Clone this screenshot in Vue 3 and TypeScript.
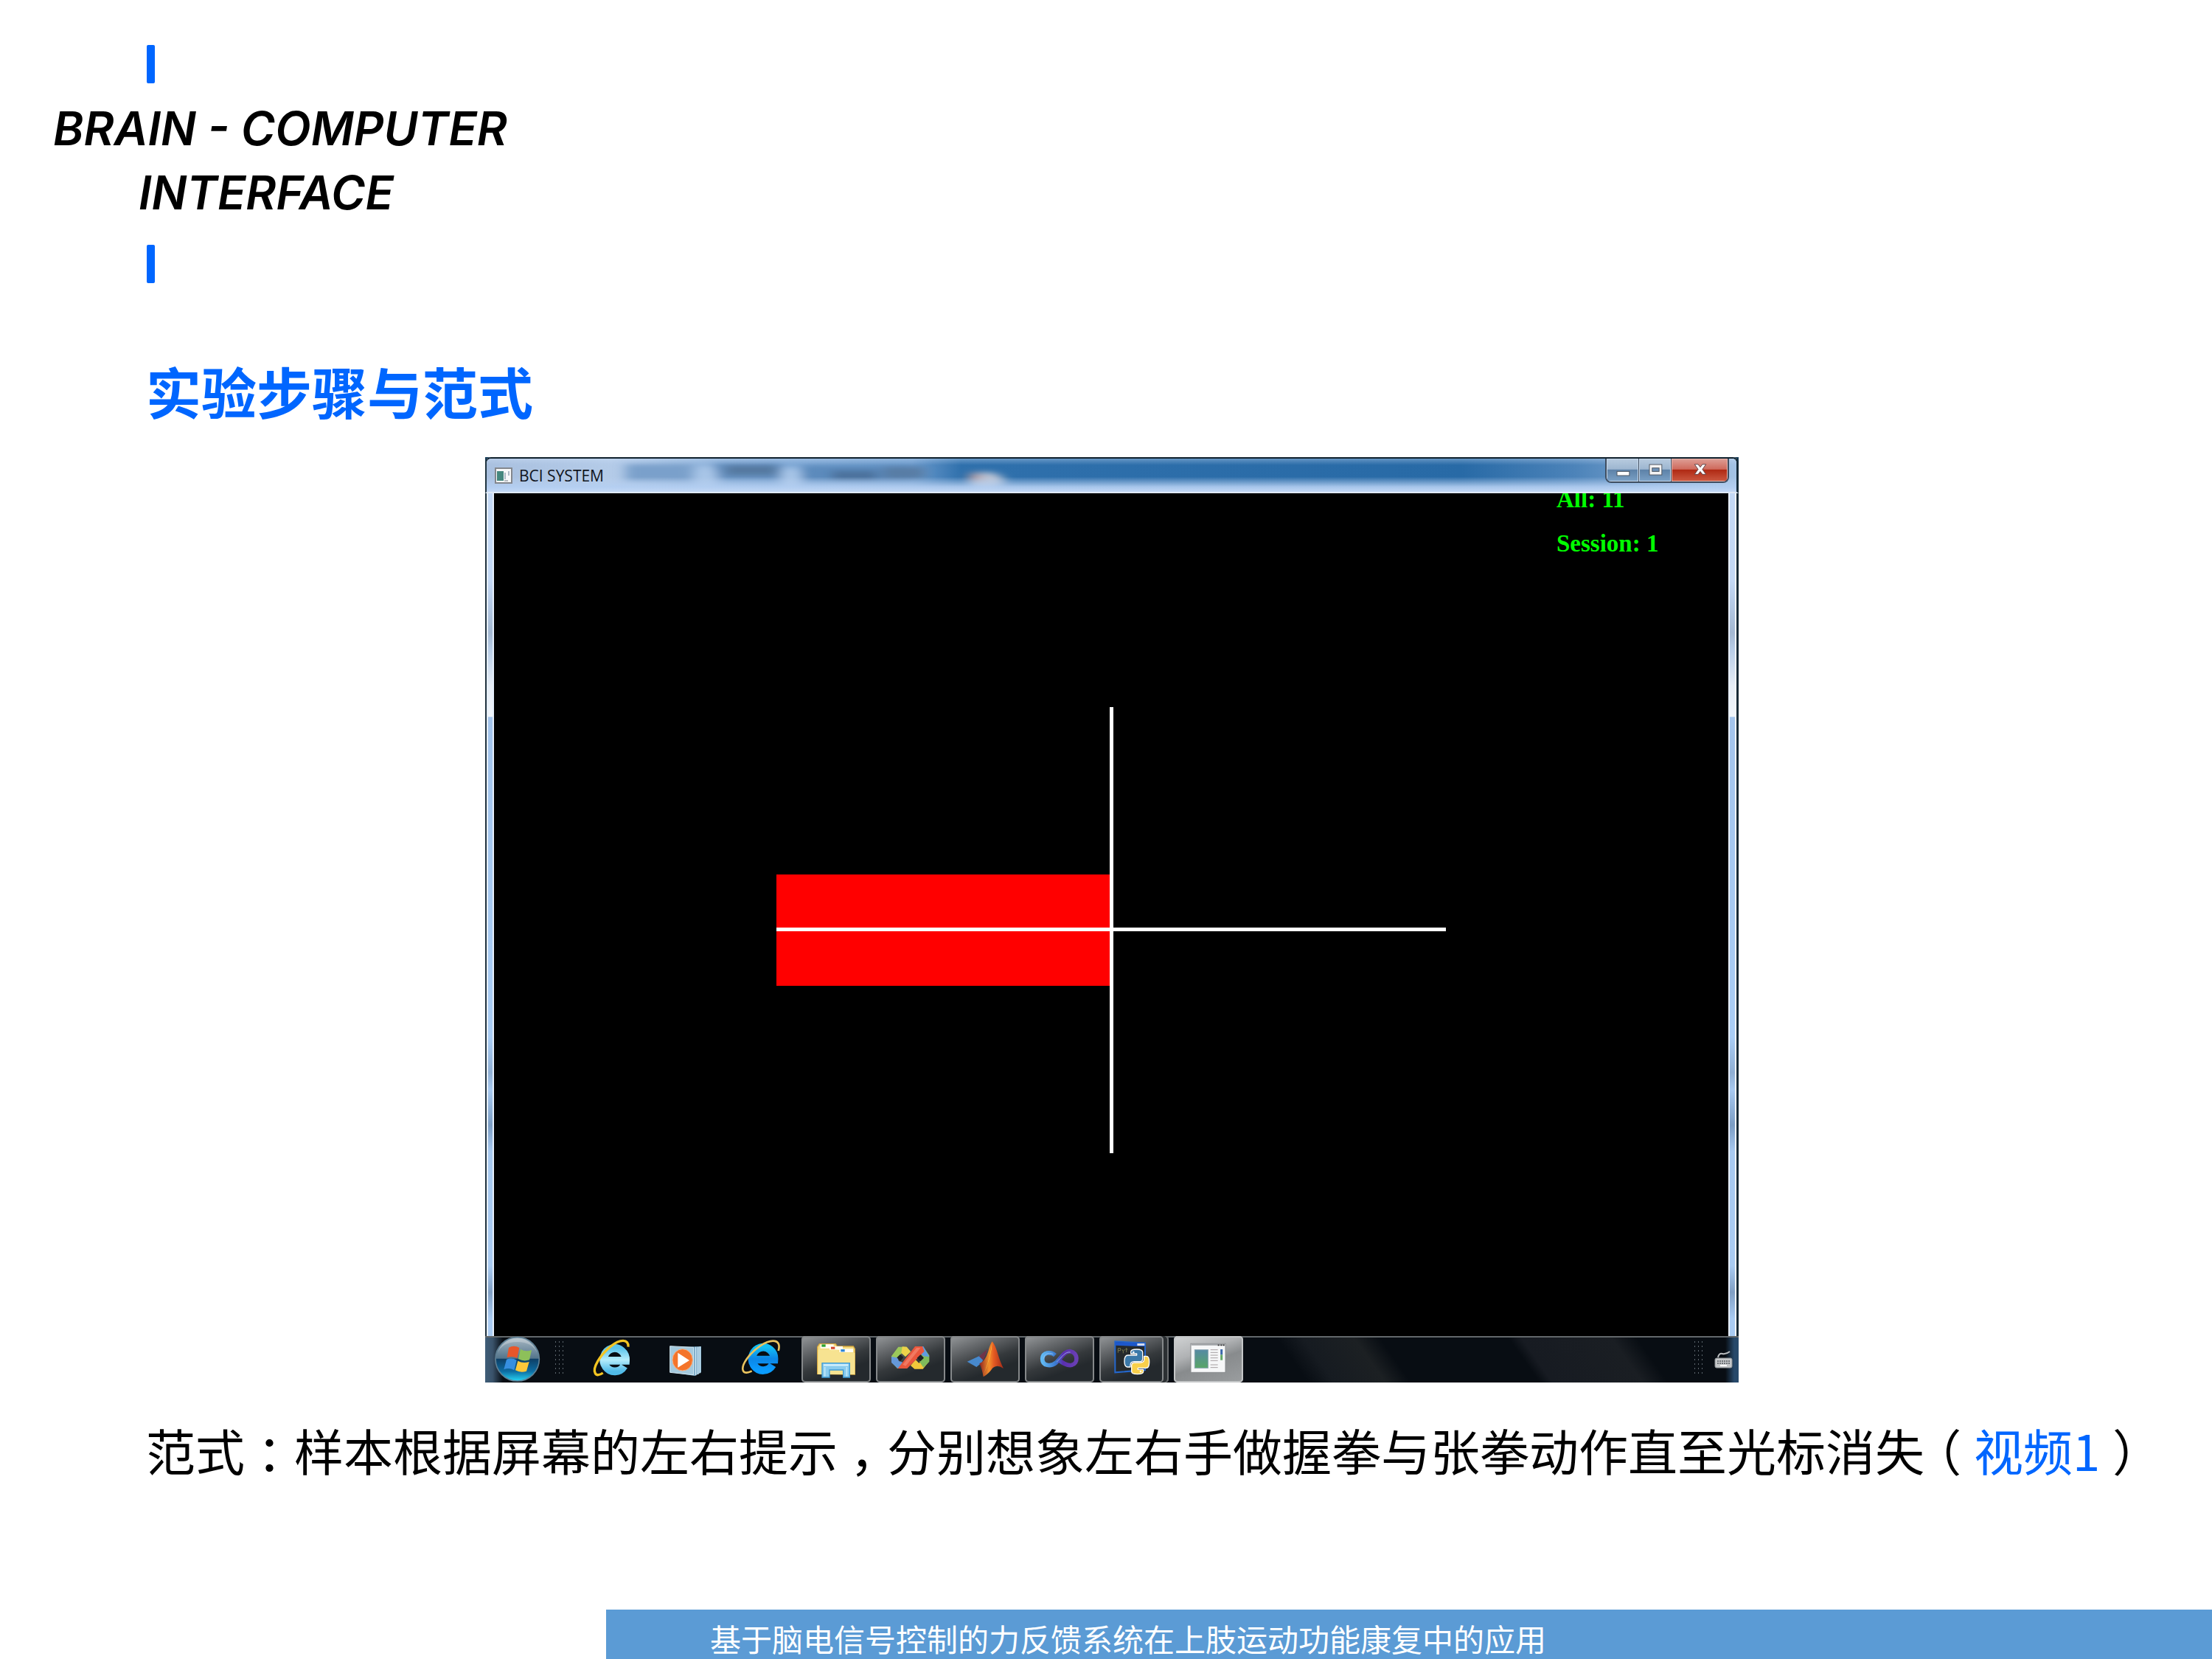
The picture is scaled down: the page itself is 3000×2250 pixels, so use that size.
<script setup lang="ts">
interface Spot {
  x: number
  width: number
  fill: string
  y: number
  height: number
}

// Soft shapes of the desktop that shine through the glass title bar.
const glassSpots: Spot[] = [
  { x: 190, y: 8, width: 90, height: 26, fill: '#7aa0cb' },
  { x: 310, y: 6, width: 90, height: 26, fill: '#6590c0' },
  { x: 325, y: 10, width: 70, height: 14, fill: '#54789f' },
  { x: 430, y: 10, width: 150, height: 24, fill: '#5c8abc' },
  { x: 470, y: 18, width: 60, height: 14, fill: '#4c719b' },
  { x: 540, y: 12, width: 56, height: 18, fill: '#587da5' },
]
const gripRows = [0, 1, 2, 3, 4, 5, 6, 7]
const gripColumns = [0, 1, 2]
const docLines = [152, 163, 174, 185, 196, 213, 224]
</script>

<template>
  <div class="page">
    <header class="brand">
      <span class="tick"></span>
      <h1>
        <span class="first">BRAIN - COMPUTER</span>
        <span class="second">INTERFACE</span>
      </h1>
      <span class="tick"></span>
    </header>

    <main>
      <h2>实验步骤与范式</h2>

      <section class="desktop" aria-label="BCI SYSTEM">
        <div class="window">
          <div class="titlebar">
            <svg class="glass" viewBox="0 0 1700 49" preserveAspectRatio="none" aria-hidden="true">
              <defs>
                <linearGradient id="tone" x1="0" x2="1" y1="0" y2="0">
                  <stop offset="0" stop-color="#a9c0df" />
                  <stop offset="0.1" stop-color="#b4cbe8" />
                  <stop offset="0.2" stop-color="#82aad6" />
                  <stop offset="0.34" stop-color="#6d9cce" />
                  <stop offset="0.38" stop-color="#2f70ac" />
                  <stop offset="0.78" stop-color="#286aa6" />
                  <stop offset="0.87" stop-color="#4c83b9" />
                  <stop offset="1" stop-color="#a4c3e4" />
                </linearGradient>
                <linearGradient id="sheen" x1="0" x2="0" y1="0" y2="1">
                  <stop offset="0" stop-color="#d6e6fa" stop-opacity="0.35" />
                  <stop offset="0.2" stop-color="#bcd2f0" stop-opacity="0" />
                  <stop offset="0.55" stop-color="#bcd2f0" stop-opacity="0" />
                  <stop offset="0.85" stop-color="#b4cff2" stop-opacity="0.9" />
                  <stop offset="1" stop-color="#c3d8f5" />
                </linearGradient>
                <filter id="soft" x="-20%" y="-60%" width="140%" height="220%">
                  <feGaussianBlur stdDeviation="8 4" />
                </filter>
              </defs>
              <rect width="1700" height="49" fill="url(#tone)" />
              <g filter="url(#soft)">
                <rect v-for="s in glassSpots" :key="s.x" :x="s.x" :y="s.y" :width="s.width" :height="s.height" :fill="s.fill" />
                <ellipse cx="298" cy="30" rx="16" ry="20" fill="#a9c6e8" />
                <ellipse cx="414" cy="30" rx="14" ry="18" fill="#a9c6e8" />
                <ellipse cx="680" cy="34" rx="24" ry="14" fill="#b9c3d4" />
                <ellipse cx="664" cy="28" rx="8" ry="8" fill="#b09aa0" />
              </g>
              <rect width="1700" height="49" fill="url(#sheen)" />
            </svg>
            <svg class="app-icon" viewBox="0 0 24 22" aria-hidden="true">
              <rect x="1" y="1" width="22" height="20" fill="#f7f8f9" stroke="#84878d" stroke-width="2" />
              <rect x="3" y="5" width="9" height="13" fill="#45877e" />
              <path d="M14 7v9M19 5v6" stroke="#657a91" stroke-width="1" />
              <path d="M13 18h5" stroke="#b6bac0" stroke-width="2" />
            </svg>
            <span class="caption">BCI SYSTEM</span>
            <div class="controls">
              <button type="button" class="control" aria-label="Minimize">
                <svg viewBox="0 0 46 32"><rect x="15" y="18" width="18" height="6" fill="#fff" stroke="#4c535c" /></svg>
              </button>
              <button type="button" class="control" aria-label="Maximize">
                <svg viewBox="0 0 46 32">
                  <rect x="15" y="8" width="18" height="15" fill="#f4f4f4" stroke="#4c535c" />
                  <rect x="19" y="13" width="10" height="5" fill="#6d91b7" stroke="#4c535c" />
                </svg>
              </button>
              <button type="button" class="control close" aria-label="Close">
                <svg viewBox="0 0 76 32">
                  <path d="M31 8h5l3 4 3-4h5l-5 7 5 7h-5l-3-4-3 4h-5l5-7z" fill="#fff" stroke="#5c4044" />
                </svg>
              </button>
            </div>
          </div>

          <svg class="scene" viewBox="0 0 1674 1143" role="img" aria-label="Session">
            <rect width="1674" height="1143" fill="#000" />
            <rect x="383" y="517" width="453" height="151" fill="#f00" />
            <rect x="383" y="589" width="908" height="5" fill="#fff" />
            <rect x="835" y="290" width="5" height="605" fill="#fff" />
            <text x="1441" y="19" class="readout">All: 11</text>
            <text x="1441" y="79" class="readout">Session: 1</text>
          </svg>
        </div>

        <nav class="taskbar">
          <button type="button" class="orb" aria-label="Start">
            <svg viewBox="90 96 192 189">
              <defs>
                <linearGradient id="orbTop" x1="0" x2="0" y1="0" y2="1">
                  <stop offset="0" stop-color="#a9b9c4" />
                  <stop offset="0.48" stop-color="#54758c" />
                  <stop offset="0.5" stop-color="#0e3f66" />
                  <stop offset="0.78" stop-color="#0d6da3" />
                  <stop offset="1" stop-color="#27d6f5" />
                </linearGradient>
              </defs>
              <circle cx="185" cy="190" r="89" fill="url(#orbTop)" stroke="#5f8095" stroke-width="5" />
              <path d="M104 166a84 84 0 0 1 162 0q-20-46-81-46t-81 46z" fill="#fff" opacity="0.25" />
              <path d="M150 143q22-12 43 1l-9 42q-18-11-41-3z" fill="#e8562a" />
              <path d="M198 149q20 13 45 4l-9 40q-24 8-45-4z" fill="#8dc05a" />
              <path d="M141 191q22-8 41 3l-10 41q-20-12-42-3z" fill="#368fe0" />
              <path d="M187 197q20 12 46 4l-11 38q-24 8-45-4z" fill="#fcc83a" />
            </svg>
          </button>

          <svg class="grip" viewBox="0 0 14 63" aria-hidden="true">
            <template v-for="r in gripRows" :key="r">
              <rect v-for="c in gripColumns" :key="c" :x="1 + c * 5" :y="7 + r * 6" width="1" height="2" fill="#5d666d" />
            </template>
          </svg>

          <div class="apps">
            <button type="button" class="app" aria-label="Internet Explorer">
              <svg viewBox="429 96 282 189">
                <defs>
                  <linearGradient id="ieLight" x1="0" x2="0" y1="0" y2="1">
                    <stop offset="0" stop-color="#5cc4ea" />
                    <stop offset="0.5" stop-color="#b5edfb" />
                    <stop offset="1" stop-color="#51bbe8" />
                  </linearGradient>
                </defs>
                <path d="M530 196H623A45 47 0 1 0 616 218" fill="none" stroke="url(#ieLight)" stroke-width="32" />
                <path d="M633 140C636 108 600 106 562 138C518 174 486 226 499 248C504 257 516 256 530 246" fill="none" stroke="#f4c521" stroke-width="10" />
              </svg>
            </button>
            <button type="button" class="app" aria-label="Media Player">
              <svg viewBox="732 96 282 189">
                <path d="M830 142l100-4v106l-26 14-80-12z" fill="#79a9c6" />
                <path d="M908 140v116M917 140v112M925 139v108" stroke="#d7edf8" stroke-width="4" />
                <path d="M803 137l96 5v112l-96-10z" fill="#a4c9dd" stroke="#d3e6ef" stroke-width="3" />
                <ellipse cx="854" cy="193" rx="41" ry="44" fill="#f4742a" stroke="#f9b183" stroke-width="3" />
                <path d="M835 164v60l47-29z" fill="#fff" />
              </svg>
            </button>
            <button type="button" class="app" aria-label="Internet Explorer">
              <svg viewBox="1035 96 282 189">
                <defs>
                  <linearGradient id="ieDeep" x1="0" x2="0" y1="0" y2="1">
                    <stop offset="0" stop-color="#12bff5" />
                    <stop offset="0.5" stop-color="#0c86e6" />
                    <stop offset="1" stop-color="#0a9cff" />
                  </linearGradient>
                </defs>
                <path d="M1134 192H1227A45 47 0 1 0 1220 214" fill="none" stroke="url(#ieDeep)" stroke-width="32" />
                <path d="M1244 156C1258 108 1216 106 1170 136C1126 166 1090 216 1101 238C1106 248 1120 246 1136 238" fill="none" stroke="#e9c25e" stroke-width="8" />
              </svg>
            </button>
            <button type="button" class="app open" aria-label="Explorer">
              <svg viewBox="78 96 282 189">
                <path d="M143 250V140l8-12h66l6 10h66l6 10v104z" fill="#f4dc83" stroke="#d5a63e" stroke-width="4" />
                <path d="M155 130h54v16h-54zM192 138h54v14h-54zM232 148h56v14h-56z" fill="#fffdf4" />
                <path d="M160 130h16v10h-16z" fill="#2aa22f" />
                <path d="M198 140h16v9h-16z" fill="#d4432a" />
                <path d="M238 150h16v10h-16z" fill="#2f87d8" />
                <path d="M145 152h80l8 12h62v88H145z" fill="#f7e391" />
                <path d="M162 264v-58h112v58h-26v-30h-56v30z" fill="#8accee" stroke="#3f9ad3" stroke-width="4" />
                <path d="M168 214h100" stroke="#d6f2ff" stroke-width="7" />
                <path d="M173 222v38M262 222v38" stroke="#c1e8fa" stroke-width="5" />
              </svg>
            </button>
            <button type="button" class="app open" aria-label="Editor">
              <svg viewBox="381 96 282 189">
                <path d="M444 178l28-38h34l16 20-22 20-14-14-16 16v16l16 18-18 12-24-26z" fill="#9bc85a" />
                <path d="M444 180v24l26 24h20l-2-26-14-4-6-14z" fill="#6598d8" />
                <path d="M506 140l16 19-20 20-18-14 4-26z" fill="#ecd24a" />
                <path d="M522 216l16 14h34l24-30-26-6-14 12-14-14z" fill="#f1c83b" />
                <path d="M558 140h16l24 34v26l-24 24-16-24 16-16-16-20z" fill="#7fbb5b" />
                <path d="M560 138h14l24 42-24-2-16-16z" fill="#5f9ae0" />
                <path d="M470 228l70-90h30l8 20-70 70z" fill="#e9573d" />
                <path d="M490 212l56-68h16l-60 74z" fill="#f7907a" opacity="0.6" />
                <path d="M562 172l14 13-14 14-14-14z" fill="#1d2023" />
                <path d="M480 170l13 13-13 15-14-14z" fill="#1d2023" />
              </svg>
            </button>
            <button type="button" class="app open" aria-label="MATLAB">
              <svg viewBox="684 96 282 189">
                <defs>
                  <linearGradient id="peak" x1="0" x2="1" y1="0" y2="0">
                    <stop offset="0" stop-color="#8c2220" />
                    <stop offset="0.4" stop-color="#f3902c" />
                    <stop offset="0.6" stop-color="#e45a22" />
                    <stop offset="1" stop-color="#a32a18" />
                  </linearGradient>
                </defs>
                <path d="M752 200l48-22 34-26-22 52-22 18z" fill="#4789cc" />
                <path d="M800 178l36-30-18 48z" fill="#703448" />
                <path d="M802 208q24-10 36-50 8-30 16-40 12 14 22 48 12 40 24 62-26-18-44-2-16 24-38 36-6-36-16-54z" fill="url(#peak)" />
                <path d="M854 120q-2 60-38 140 24-60 30-94z" fill="#ffd54c" opacity="0.8" />
              </svg>
            </button>
            <button type="button" class="app open" aria-label="Blend">
              <svg viewBox="57 96 282 189">
                <defs>
                  <linearGradient id="loop" x1="0" x2="1" y1="0" y2="0">
                    <stop offset="0" stop-color="#61b9f3" />
                    <stop offset="0.4" stop-color="#3a78cf" />
                    <stop offset="0.6" stop-color="#5a2fb0" />
                    <stop offset="1" stop-color="#6a3fb4" />
                  </linearGradient>
                </defs>
                <path d="M180 174C162 158 130 162 128 188C128 218 162 222 184 204C206 184 218 156 242 158C274 164 274 208 248 214C228 218 210 206 194 192" fill="none" stroke="url(#loop)" stroke-width="17" />
                <path d="M172 170C152 160 134 170 134 188M186 202C208 182 220 158 242 162" fill="none" stroke="#a7c9f2" stroke-width="3" opacity="0.7" />
              </svg>
            </button>
            <button type="button" class="app open stacked" aria-label="Python">
              <svg viewBox="360 96 282 189">
                <path d="M424 118l122 6v110l-122 10z" fill="#262a2c" stroke="#2467cc" stroke-width="6" />
                <path d="M424 120l122 5v14l-122-5z" fill="#1d58cc" />
                <path d="M514 126h30v9h-30z" fill="#d5dced" />
                <path d="M436 146v18M436 146h10v9h-10M452 150l5 8 6-8M457 158v8M470 144v18M466 150h9" stroke="#777850" stroke-width="3" fill="none" />
                <g stroke="#fff" stroke-width="4" stroke-linejoin="round">
                  <path d="M488 160q0-10 24-10t24 12v26q0 12-12 12h-24q-14 0-14 16v6h-12q-12 0-12-24t14-24h36v-6h-24z" fill="#3b78a8" />
                  <path d="M542 178h10q11 0 11 24t-12 24h-34v6h22v8q0 11-24 11t-24-11v-24q0-12 12-12h24q15 0 15-14z" fill="#f8cf4b" />
                </g>
                <circle cx="499" cy="162" r="4" fill="#fff" />
                <circle cx="528" cy="240" r="4" fill="#fff" />
              </svg>
            </button>
            <button type="button" class="app open active" aria-label="BCI SYSTEM">
              <svg viewBox="663 96 282 189">
                <defs>
                  <linearGradient id="thumb" x1="0" x2="0" y1="0" y2="1">
                    <stop offset="0" stop-color="#558aa4" />
                    <stop offset="1" stop-color="#58a566" />
                  </linearGradient>
                </defs>
                <rect x="732" y="127" width="141" height="117" fill="#f6f7f8" stroke="#86898c" stroke-width="3" />
                <path d="M734 131h137" stroke="#a2a5a8" stroke-width="7" />
                <path d="M842 133h6M853 133h6M863 133h6" stroke="#333" stroke-width="5" />
                <rect x="748" y="152" width="54" height="74" fill="url(#thumb)" stroke="#87a2af" stroke-width="3" />
                <path v-for="y in docLines" :key="y" :d="`M812 ${y}h30`" stroke="#a49ea0" stroke-width="3" />
                <path d="M857 150v22" stroke="#3b68aa" stroke-width="9" />
                <path d="M857 172v22" stroke="#62a766" stroke-width="9" />
              </svg>
            </button>
          </div>

          <div class="tray">
            <svg class="grip" viewBox="0 0 14 63" aria-hidden="true">
              <template v-for="r in gripRows" :key="r">
                <rect v-for="c in gripColumns" :key="c" :x="1 + c * 5" :y="7 + r * 6" width="1" height="2" fill="#5d666d" />
              </template>
            </svg>
            <svg class="keyboard" viewBox="0 0 26 24" aria-hidden="true">
              <path d="M5 9q1-6 6-5t10-3" fill="none" stroke="#b9bcbf" stroke-width="2" />
              <rect x="1" y="10" width="23" height="13" rx="2" fill="#c6c8ca" stroke="#8f9497" />
              <path d="M4 14h17M4 17h17" stroke="#6d7276" stroke-width="2" stroke-dasharray="2 1" />
              <path d="M8 20h9" stroke="#fff" stroke-width="2" />
            </svg>
          </div>
        </nav>
      </section>

      <p class="note">范式<span class="mark">：</span>样本根据屏幕的左右提示<span class="mark">，</span>分别想象左右手做握拳与张拳动作直至光标消失<span class="mark">（</span><a href="#video-1">视频1</a><span class="mark">）</span></p>
    </main>

    <footer>基于脑电信号控制的力反馈系统在上肢运动功能康复中的应用</footer>
  </div>
</template>

<style>
body {
  background: #fff;
}
</style>

<style scoped>
.page {
  display: flex;
  flex-direction: column;
  min-height: 100vh;
  box-sizing: border-box;
  padding-top: 61px;
  color: #000;
  font-family: "Noto Sans CJK SC", sans-serif;
}

.brand {
  display: flex;
  flex-direction: column;
  gap: 18px;
}

.tick {
  width: 11px;
  height: 52px;
  margin-left: 199px;
  border-radius: 2px;
  background: #06f;
}

h1 {
  display: flex;
  flex-direction: column;
  margin: 0 0 9px;
  font: italic 600 63px/87px Inter, sans-serif;
}

.first {
  margin-left: 72px;
}

.second {
  margin-left: 188px;
}

main {
  padding-left: 198px;
}

h2 {
  margin: 96px 0 40px;
  color: #06f;
  font-size: 75px;
  line-height: 100px;
  font-weight: 700;
}

.desktop {
  max-width: 1700px;
  margin-left: max(0px, calc((100% - 182px - 1700px) / 2));
  background: linear-gradient(#143a56 0 12px, transparent 12px);
}

.window {
  padding: 0 14px 0 12px;
  border-radius: 8px 8px 0 0;
  background:
    linear-gradient(90deg, #20323e 0 2px, #e6effb 2px 4px, transparent 4px 10px, #e6effb 10px 12px, transparent 12px calc(100% - 14px), #e9f0fb calc(100% - 14px) calc(100% - 12px), transparent calc(100% - 12px) calc(100% - 5px), #f2f7fd calc(100% - 5px) calc(100% - 3px), #182a36 calc(100% - 3px)),
    linear-gradient(#c4d9f6 0, #c3d8f5 14%, #a3b8d2 20%, #b9cee8 22%, #e6edf6 26%, #f0f5fb 29.5%, #a3c4ec 29.6%, #a9cdf5 66%, #8fafd4 70%, #a7c9f0 72%, #7b9dc4 76%, #a7c9f0 79%, #a9cbf2 92%, #809fc4 95%, #a9cbf2 98%);
}

.titlebar {
  position: relative;
  display: flex;
  align-items: center;
  height: 49px;
  margin: 0 -14px 0 -12px;
  padding-left: 11px;
  box-sizing: border-box;
  border-top: 2px solid #10212d;
  border-bottom: 2px solid #dfe9f6;
  border-left: 2px solid #203440;
  border-right: 3px solid #142a38;
  border-radius: 8px 8px 0 0;
  overflow: hidden;
}

.glass {
  position: absolute;
  inset: 0;
  width: 100%;
  height: 100%;
}

.app-icon {
  position: relative;
  width: 24px;
  height: 22px;
}

.caption {
  position: relative;
  margin-left: 9px;
  color: #10141c;
  font: 21px/28px "Open Sans", sans-serif;
}

.controls {
  position: relative;
  display: flex;
  align-self: flex-start;
  margin: 0 10px 0 auto;
  border: 2px solid #3e4d60;
  border-top: 0;
  border-radius: 0 0 8px 8px;
  overflow: hidden;
}

.control {
  width: 44px;
  height: 31px;
  padding: 0;
  border: 0;
  border-right: 1px solid #3e4d60;
  background: linear-gradient(#b8cbdf 0, #9db6d0 46%, #5d82a8 50%, #7ba1c6 100%);
  box-shadow: inset 0 0 0 1px #c8d9eb;
}

.control.close {
  width: 76px;
  border-right: 0;
  background: linear-gradient(#dea097 0, #cf6a5c 46%, #b02a14 50%, #cc5a42 100%);
  box-shadow: inset 0 0 0 1px #e8b5ac;
}

.control svg {
  display: block;
  width: 100%;
  height: 31px;
}

.scene {
  display: block;
  width: 100%;
  height: auto;
}

.readout {
  fill: #0f0;
  font: 700 33px "Liberation Serif", serif;
}

.taskbar {
  display: flex;
  align-items: center;
  height: 63px;
  padding: 0 7px 0 12px;
  box-shadow: inset 0 2px #62676a;
  background:
    linear-gradient(90deg, #3f5d78 0, #3a536b 10px, transparent 24px, transparent calc(100% - 18px), #27496a calc(100% - 6px)),
    linear-gradient(55deg, transparent 64%, #161b21 66%, #1c2023 70%, transparent 72%, transparent 82%, #171b22 83%, #1a1e23 90%, transparent 92%),
    #080d13;
}

.orb {
  width: 64px;
  height: 63px;
  padding: 0;
  border: 0;
  background: none;
}

.orb svg,
.app svg {
  display: block;
  width: 100%;
  height: 63px;
}

.grip {
  width: 14px;
  height: 63px;
  flex: none;
}

.orb + .grip {
  margin: 0 18px;
}

.apps {
  display: flex;
  gap: 7px;
}

.app {
  width: 94px;
  height: 63px;
  padding: 0;
  border: 0;
  border-radius: 5px;
  background: none;
}

.app.open {
  background: linear-gradient(160deg, #96999b 0, #66696c 25%, #35393c 52%, #24292d 70%);
  box-shadow: inset 0 0 0 2px #85888a;
}

.app.stacked {
  box-shadow: inset -2px 0 #6c6f71, inset -7px 0 #2c3033, inset -9px 0 #85888a, inset 0 0 0 2px #85888a;
}

.app.active {
  background: linear-gradient(160deg, #d2d4d5 0, #b0b2b4 35%, #888b8d 55%, #9b9ea0 100%);
  box-shadow: inset 0 0 0 2px #c5c7c8;
}

.tray {
  display: flex;
  align-items: center;
  gap: 14px;
  margin-left: auto;
}

.keyboard {
  width: 26px;
  height: 24px;
}

.note {
  margin: 41px 0 0;
  font-size: 67px;
  line-height: 100px;
}

.mark {
  display: inline-block;
  width: 1em;
  text-align: center;
  font-feature-settings: "halt";
}

.note a {
  color: #06f;
  text-decoration: none;
}

footer {
  margin: auto 0 0 27.4%;
  padding: 10px 0 0 4.7%;
  background: #5b9bd5;
  color: #fff;
  font-size: 42px;
  line-height: 57px;
}
</style>
